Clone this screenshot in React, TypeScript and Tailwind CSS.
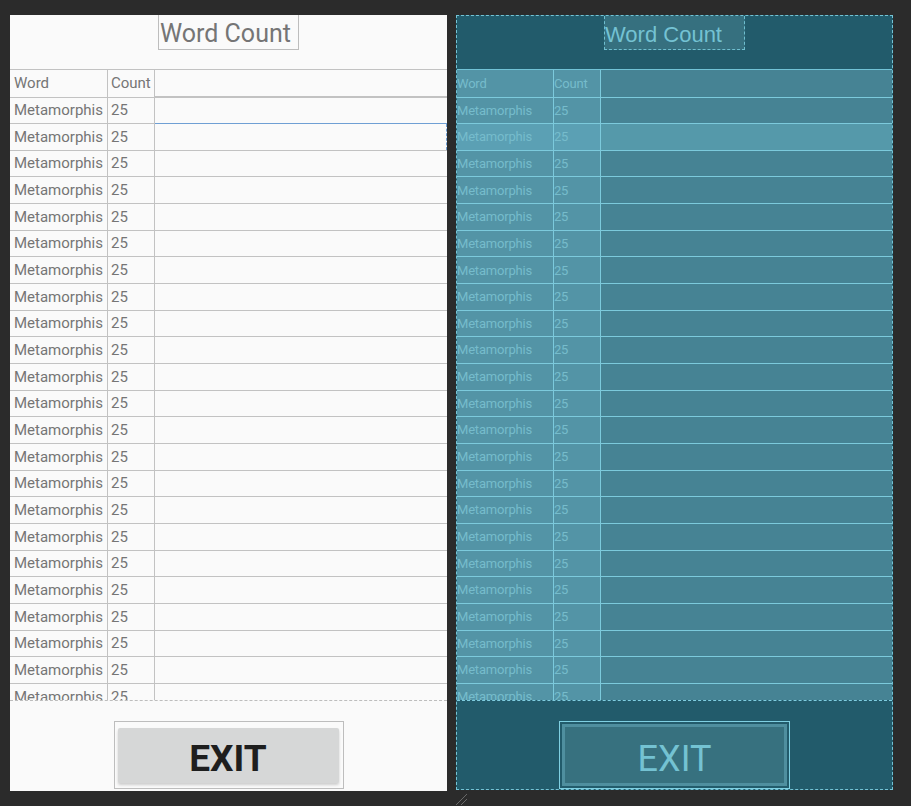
import React from "react";

const ROWS = Array.from({ length: 24 }, (_, i) => i);

function DesignPanel() {
  return (
    <div className="w-[437px] h-[776px] flex flex-col bg-[#fafafa] font-['Roboto',sans-serif] text-[#757575]">
      {/* title */}
      <div className="h-[54px] flex justify-center">
        <div className="w-[141px] h-[35px] border border-[#bdbdbd] border-t-0 text-[25px] leading-[34px] pt-[2px] pl-[1px] whitespace-nowrap">
          Word Count
        </div>
      </div>

      {/* table */}
      <div className="h-[632px] overflow-hidden border-b border-dashed border-[#bdbdbd]">
        <div className="flex h-[28.5px] border-t border-[#c2c2c2]">
          <div className="w-[98px] border-r border-b border-[#c2c2c2] flex items-center px-[4px] text-[15px]">Word</div>
          <div className="w-[47px] border-r border-b border-[#c2c2c2] flex items-center px-[3px] text-[15px]">Count</div>
          <div className="flex-1 border-b-2 border-[#c2c2c2]" />
        </div>
        {ROWS.map((i) => (
          <div key={i} className="flex h-[26.67px]">
            <div className="w-[98px] border-r border-b border-[#c2c2c2] flex items-center px-[4px] text-[15px] whitespace-nowrap overflow-hidden">
              Metamorphis
            </div>
            <div className="w-[47px] border-r border-b border-[#c2c2c2] flex items-center px-[3px] text-[15px]">25</div>
            {i === 0 ? (
              <div className="flex-1 border-b border-[#6f9fd4]" />
            ) : i === 1 ? (
              <div className="flex-1 border-b border-[#c2c2c2] flex justify-end">
                <div className="w-px h-full border-r border-dashed border-[#6f9fd4]" />
              </div>
            ) : (
              <div className="flex-1 border-b border-[#c2c2c2]" />
            )}
          </div>
        ))}
      </div>

      {/* bottom */}
      <div className="flex-1 flex justify-center pt-[20px]">
        <div className="w-[230px] h-[68px] border border-[#bdbdbd] pl-[3px] pt-[6px] pr-[4px] pb-[5px] flex">
          <div className="flex-1 bg-[#d6d7d7] rounded-[2px] shadow-[0_2px_3px_rgba(0,0,0,0.18)] flex items-center justify-center pt-[7px] text-[37px] font-bold text-[#1e1e1e]">
            EXIT
          </div>
        </div>
      </div>
    </div>
  );
}

function BlueprintPanel() {
  return (
    <div className="w-[437px] h-[776px] flex flex-col bg-[#225b6b] border border-dashed border-[#74c4d6] font-['Roboto',sans-serif] text-[#76bccc]">
      <div className="h-[53px] flex justify-center">
        <div className="w-[141px] h-[34px] bg-[#36707f] border border-t-0 border-dashed border-[#6fbfd0] text-[22px] leading-[34px] pt-[2px] font-['Liberation_Sans',sans-serif] text-[#74c2d3] whitespace-nowrap">
          Word Count
        </div>
      </div>

      <div className="h-[632px] overflow-hidden border-b border-dashed border-[#7fcde0]">
        <div className="flex h-[28.5px] border-t border-[#72c3d6] bg-[#468394]">
          <div className="w-[97px] bg-[#5394a6] border-r border-b border-[#7ccadc] flex items-center text-[13px] tracking-[-0.2px]">Word</div>
          <div className="w-[47px] bg-[#5394a6] border-r border-b border-[#7ccadc] flex items-center text-[13px] tracking-[-0.2px]">Count</div>
          <div className="flex-1 border-b border-[#7ccadc]" />
        </div>
        {ROWS.map((i) => (
          <div key={i} className={i === 1 ? "flex h-[26.67px] bg-[#5599aa]" : "flex h-[26.67px] bg-[#468394]"}>
            <div
              className={
                (i === 1 ? "bg-[#5ba0b4] " : "bg-[#5394a6] ") +
                "w-[97px] border-r border-b border-[#7ccadc] flex items-center text-[13px] tracking-[-0.2px] whitespace-nowrap overflow-hidden"
              }
            >
              Metamorphis
            </div>
            <div
              className={
                (i === 1 ? "bg-[#5ba0b4] " : "bg-[#5394a6] ") +
                "w-[47px] border-r border-b border-[#7ccadc] flex items-center text-[13px] tracking-[-0.2px]"
              }
            >
              25
            </div>
            <div className="flex-1 border-b border-[#7ccadc]" />
          </div>
        ))}
      </div>

      <div className="flex-1 flex justify-center pt-[20px]">
        <div className="w-[231px] h-[68px] border border-[#7fd0e2] p-[2px] flex">
          <div className="flex-1 bg-[#37717f] border-[3px] border-[#4f8f9f] flex items-center justify-center pt-[7px] text-[36px] text-[#74c2d2]">
            EXIT
          </div>
        </div>
      </div>
    </div>
  );
}

export default function App() {
  return (
    <div className="w-[911px] h-[806px] bg-[#2b2b2b] flex gap-[9px] pl-[10px] pt-[15px] overflow-hidden">
      <DesignPanel />
      <div className="flex flex-col">
        <BlueprintPanel />
        <svg width="16" height="15" viewBox="0 0 16 15" className="mt-[1px]">
          <line x1="11" y1="3" x2="0" y2="14" stroke="#6b6b6b" strokeWidth="1" />
          <line x1="11" y1="8" x2="5" y2="14" stroke="#6b6b6b" strokeWidth="1" />
        </svg>
      </div>
    </div>
  );
}
